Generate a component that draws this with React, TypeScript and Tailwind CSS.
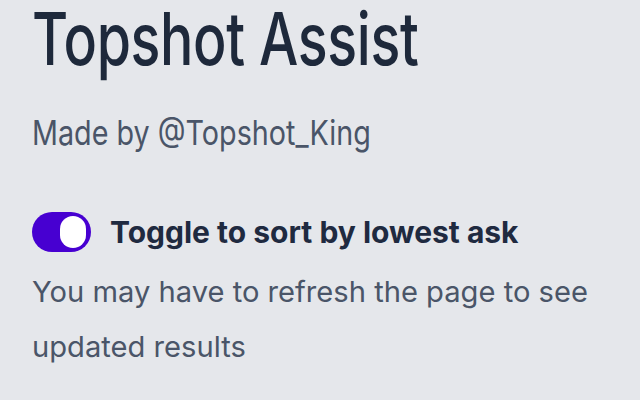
import React, { useState } from 'react';

export default function App() {
  const [sorted, setSorted] = useState(true);

  return (
    <div className="w-[640px] h-[400px] overflow-hidden bg-[#e5e7eb] pl-[32px] pt-[4px] font-['Inter','Liberation_Sans',sans-serif]">
      <h1 className="origin-left scale-x-[0.76] text-[73px] leading-[70px] font-medium text-[#1e293b] tracking-[-0.5px] whitespace-nowrap">
        Topshot Assist
      </h1>
      <p className="mt-[42px] origin-left scale-x-[0.845] text-[34px] leading-none text-[#4a5568] whitespace-nowrap">
        Made by @Topshot_King
      </p>

      <div className="mt-[62px] flex items-center gap-[19px]">
        <button
          onClick={() => setSorted(!sorted)}
          className={`flex h-[40px] w-[59px] shrink-0 items-center rounded-full px-[5px] ${sorted ? 'justify-end bg-[#4700d1]' : 'justify-start bg-gray-400'}`}
        >
          <span className="block h-[32px] w-[26px] rounded-full bg-white" />
        </button>
        <span className="text-[30px] font-bold leading-none text-[#1f2a40] whitespace-nowrap">Toggle to sort by lowest ask</span>
      </div>

      <p className="mt-[12px] w-[600px] origin-left scale-x-[1.005] text-[29px] leading-[55px] text-[#4a5568]">
        You may have to refresh the page to see updated results
      </p>
    </div>
  );
}
